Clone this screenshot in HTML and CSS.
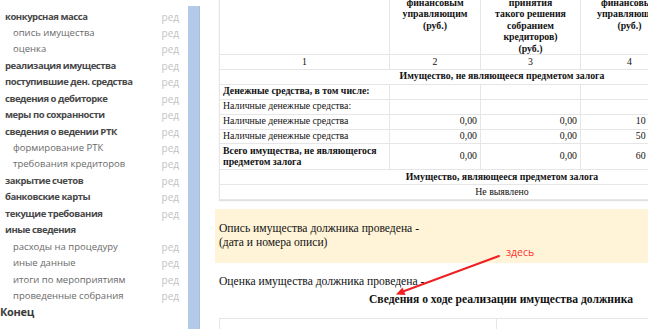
FILE: index.html
```html
<!DOCTYPE html>
<html lang="ru">
<head>
<meta charset="utf-8">
<title>Отчет</title>
<link rel="stylesheet" href="styles.css">
</head>
<body>
<div class="page">
  <nav class="sidebar">
    <div class="item main-item"><span>конкурсная масса</span><span class="ed">ред</span></div>
    <div class="item sub-item"><span>опись имущества</span><span class="ed">ред</span></div>
    <div class="item sub-item"><span>оценка</span><span class="ed">ред</span></div>
    <div class="item main-item"><span>реализация имущества</span><span class="ed">ред</span></div>
    <div class="item main-item"><span>поступившие ден. средства</span><span class="ed">ред</span></div>
    <div class="item main-item"><span>сведения о дебиторке</span><span class="ed">ред</span></div>
    <div class="item main-item"><span>меры по сохранности</span><span class="ed">ред</span></div>
    <div class="item main-item"><span>сведения о ведении РТК</span><span class="ed">ред</span></div>
    <div class="item sub-item"><span>формирование РТК</span><span class="ed">ред</span></div>
    <div class="item sub-item"><span>требования кредиторов</span><span class="ed">ред</span></div>
    <div class="item main-item"><span>закрытие счетов</span><span class="ed">ред</span></div>
    <div class="item main-item"><span>банковские карты</span><span class="ed">ред</span></div>
    <div class="item main-item"><span>текущие требования</span><span class="ed">ред</span></div>
    <div class="item main-item"><span>иные сведения</span></div>
    <div class="item sub-item"><span>расходы на процедуру</span><span class="ed">ред</span></div>
    <div class="item sub-item"><span>иные данные</span><span class="ed">ред</span></div>
    <div class="item sub-item"><span>итоги по мероприятиям</span><span class="ed">ред</span></div>
    <div class="item sub-item"><span>проведенные собрания</span><span class="ed">ред</span></div>
    <div class="item end-item"><span>Конец</span></div>
  </nav>
  <div class="bar"></div>
  <main class="main">
    <table class="report">
      <colgroup>
        <col class="c1"><col class="c2"><col class="c3"><col class="c4"><col class="c5">
      </colgroup>
      <tr class="head">
        <td></td>
        <td>финансовым<br>управляющим<br>(руб.)</td>
        <td>принятия<br>такого решения<br>собранием<br>кредиторов)<br>(руб.)</td>
        <td>финансовым<br>управляющим<br>(руб.)</td>
        <td></td>
      </tr>
      <tr class="nums"><td>1</td><td>2</td><td>3</td><td>4</td><td>5</td></tr>
      <tr><td colspan="5" class="section">Имущество, не являющееся предметом залога</td></tr>
      <tr><td class="b">Денежные средства, в том числе:</td><td></td><td></td><td></td><td></td></tr>
      <tr><td>Наличные денежные средства:</td><td></td><td></td><td></td><td></td></tr>
      <tr><td>Наличные денежные средства</td><td class="n">0,00</td><td class="n">0,00</td><td class="n">10 000,00</td><td></td></tr>
      <tr><td>Наличные денежные средства</td><td class="n">0,00</td><td class="n">0,00</td><td class="n">50 000,00</td><td></td></tr>
      <tr><td class="b">Всего имущества, не являющегося<br>предметом залога</td><td class="n">0,00</td><td class="n">0,00</td><td class="n">60 000,00</td><td></td></tr>
      <tr><td colspan="5" class="section">Имущество, являющееся предметом залога</td></tr>
      <tr><td colspan="5" class="center">Не выявлено</td></tr>
    </table>

    <div class="note">Опись имущества должника проведена -<br>(дата и номера описи)</div>

    <p class="para">Оценка имущества должника проведена -</p>
    <h3 class="title">Сведения о ходе реализации имущества должника</h3>

    <table class="report2">
      <tr><td class="d1"></td><td class="d2"></td></tr>
    </table>
  </main>
</div>

<div class="annot">здесь</div>
<svg class="arrow" width="648" height="329" viewBox="0 0 648 329">
  <line x1="499" y1="256" x2="403" y2="291.5" stroke="#ef1f23" stroke-width="2" stroke-linecap="round"/>
  <polygon points="396,294.5 405.5,295 402.5,287.5" fill="#ef1f23"/>
</svg>
</body>
</html>
```

FILE: styles.css
```css
html, body {
  margin: 0;
  padding: 0;
  background: #ffffff;
  overflow: hidden;
}

.page {
  display: flex;
  width: 648px;
  height: 329px;
  overflow: hidden;
  position: relative;
}

.sidebar {
  width: 188px;
  flex-shrink: 0;
  padding-top: 8.5px;
  box-sizing: border-box;
  font-family: "Open Sans", "Noto Sans", sans-serif;
  font-size: 9.5px;
}

.item {
  height: 16.44px;
  line-height: 16.44px;
  display: flex;
  justify-content: space-between;
  padding-right: 9px;
  white-space: nowrap;
}

.main-item {
  padding-left: 5px;
  font-weight: 700;
  color: #484848;
  letter-spacing: -0.45px;
}

.sub-item {
  padding-left: 13px;
  color: #6a6a6a;
}

.end-item {
  padding-left: 0;
  font-weight: 700;
  font-size: 11px;
  color: #3a3a3a;
  letter-spacing: -0.3px;
}

.ed {
  color: #c2c2c2;
  font-weight: 400;
  letter-spacing: 0;
  font-size: 10px;
}

.bar {
  width: 11px;
  flex-shrink: 0;
  margin-top: 6px;
  background: #b3cae9;
  border-right: 1px solid #a6bee3;
}

.main {
  width: 572px;
  flex-shrink: 0;
  margin-left: 15px;
  font-family: "Liberation Serif", "Times New Roman", serif;
  color: #111;
}

.report {
  margin-top: -4px;
  margin-left: 4px;
  width: 565px;
  border-collapse: collapse;
  table-layout: fixed;
  border: 1px solid #dcdcdc;
  box-shadow: 0 1px 1px rgba(0, 0, 0, 0.12);
  font-size: 9.8px;
  line-height: 10.9px;
}

.c1 { width: 170px; }
.c2 { width: 91px; }
.c3 { width: 100px; }
.c4 { width: 98px; }
.c5 { width: 106px; }

.report td {
  border: 1px solid #e6e6e6;
  padding: 1.5px 3px;
  vertical-align: middle;
  white-space: nowrap;
}

.report .head td {
  font-weight: bold;
  text-align: center;
  vertical-align: top;
  line-height: 11.4px;
  padding: 0 3px;
}

.report .nums td {
  text-align: center;
}

.report td.section {
  font-weight: bold;
  text-align: center;
}

.report td.center {
  text-align: center;
}

.report td.b {
  font-weight: bold;
}

.report td.n {
  text-align: right;
}

.note {
  margin-top: 9px;
  background: #fff4d8;
  padding: 13px 4px;
  font-size: 11.6px;
  line-height: 14px;
}

.para {
  margin: 12px 0 0 4px;
  font-size: 11.6px;
  line-height: 14px;
}

.title {
  margin: 4px 0 0 0;
  text-align: center;
  font-size: 11.6px;
  line-height: 14px;
  font-weight: bold;
}

.report2 {
  margin-top: 11px;
  margin-left: 4px;
  width: 565px;
  border-collapse: collapse;
  table-layout: fixed;
  border: 1px solid #dcdcdc;
}

.report2 td {
  border: 1px solid #e6e6e6;
  height: 20px;
}

.d1 { width: 274px; }

.annot {
  position: absolute;
  left: 506px;
  top: 244px;
  font-family: "Open Sans", "Noto Sans", sans-serif;
  font-size: 10.5px;
  line-height: 16px;
  color: #ff3434;
}

.arrow {
  position: absolute;
  left: 0;
  top: 0;
  pointer-events: none;
}
```
